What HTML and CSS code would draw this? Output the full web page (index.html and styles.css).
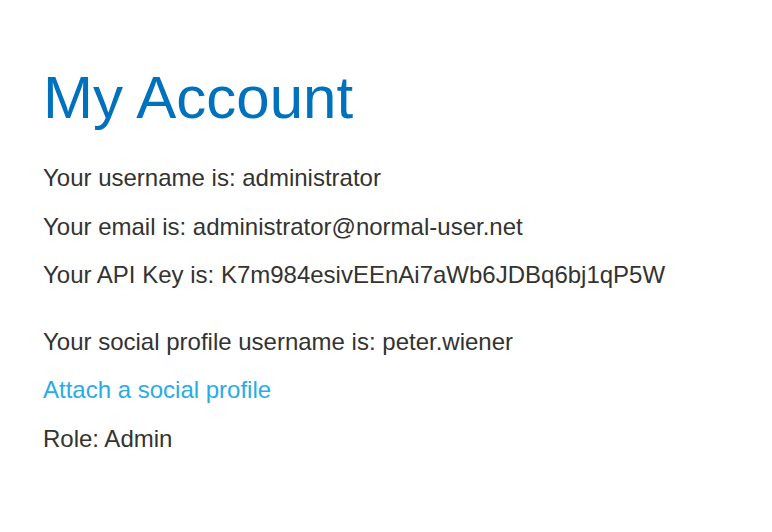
FILE: index.html
```html
<!DOCTYPE html>
<html lang="en">
<head>
<meta charset="utf-8">
<title>My Account</title>
<link rel="stylesheet" href="styles.css">
</head>
<body>
<div class="account">
  <h1 class="title">My Account</h1>
  <p class="line">Your username is: administrator</p>
  <p class="line">Your email is: administrator@normal-user.net</p>
  <p class="line">Your API Key is: K7m984esivEEnAi7aWb6JDBq6bj1qP5W</p>
  <p class="line gap">Your social profile username is: peter.wiener</p>
  <p class="line"><a class="link" href="#">Attach a social profile</a></p>
  <p class="line">Role: Admin</p>
</div>
</body>
</html>
```

FILE: styles.css
```css
html, body {
  margin: 0;
  padding: 0;
  background: #ffffff;
}

body {
  font-family: "Liberation Sans", Arial, Helvetica, sans-serif;
  font-size: 24px;
  color: #333332;
}

.account {
  padding: 65px 0 0 43px;
}

.title {
  margin: 0 0 30px;
  font-size: 60px;
  line-height: 1.1;
  font-weight: 400;
  color: #0071bc;
}

.line {
  margin: 0 0 15px;
  line-height: 1.4;
}

.gap {
  margin-top: 33px;
}

.link {
  color: #29ace5;
  text-decoration: none;
}
```
